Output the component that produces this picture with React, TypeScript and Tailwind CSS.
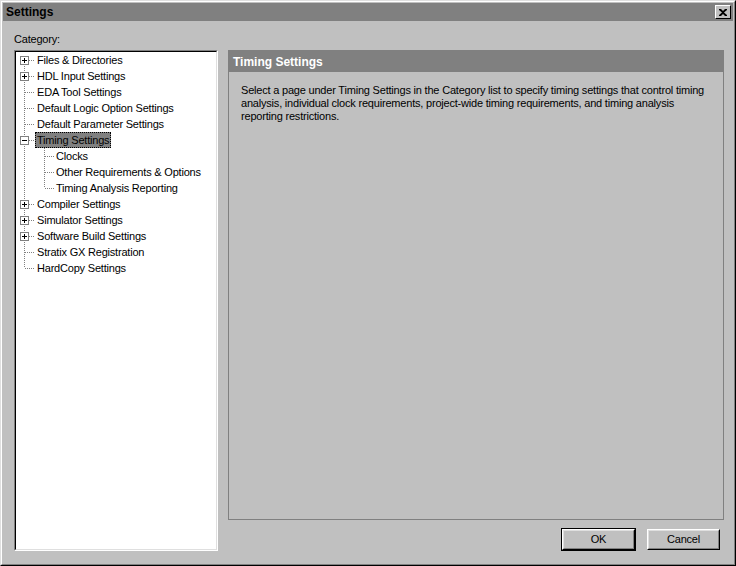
import React from "react";

type Node = {
  label: string;
  kind: "plus" | "minus" | "leaf" | "child";
  last?: boolean;
  first?: boolean;
  childLast?: boolean;
  selected?: boolean;
};

const nodes: Node[] = [
  { label: "Files & Directories", kind: "plus", first: true },
  { label: "HDL Input Settings", kind: "plus" },
  { label: "EDA Tool Settings", kind: "leaf" },
  { label: "Default Logic Option Settings", kind: "leaf" },
  { label: "Default Parameter Settings", kind: "leaf" },
  { label: "Timing Settings", kind: "minus", selected: true },
  { label: "Clocks", kind: "child" },
  { label: "Other Requirements & Options", kind: "child" },
  { label: "Timing Analysis Reporting", kind: "child", childLast: true },
  { label: "Compiler Settings", kind: "plus" },
  { label: "Simulator Settings", kind: "plus" },
  { label: "Software Build Settings", kind: "plus" },
  { label: "Stratix GX Registration", kind: "leaf" },
  { label: "HardCopy Settings", kind: "leaf", last: true },
];

const dot = { stroke: "#808080", strokeWidth: 1, strokeDasharray: "1 1", shapeRendering: "crispEdges" as const };

function Connector({ node }: { node: Node }) {
  const isChild = node.kind === "child";
  const w = isChild ? 38 : 19;
  const y1 = node.first ? 8 : 0;
  const y2 = node.last ? 8 : 16;
  return (
    <svg width={w} height={16} className="shrink-0">
      <line x1={8.5} y1={y1} x2={8.5} y2={y2} style={dot} />
      {!isChild && <line x1={9} y1={8.5} x2={19} y2={8.5} style={dot} />}
      {isChild && (
        <>
          <line x1={28.5} y1={0} x2={28.5} y2={node.childLast ? 8 : 16} style={dot} />
          <line x1={29} y1={8.5} x2={38} y2={8.5} style={dot} />
        </>
      )}
      {(node.kind === "plus" || node.kind === "minus") && (
        <>
          <rect x={4.5} y={4.5} width={8} height={8} fill="#ffffff" stroke="#808080" shapeRendering="crispEdges" />
          <line x1={6} y1={8.5} x2={11} y2={8.5} stroke="#000" shapeRendering="crispEdges" />
          {node.kind === "plus" && <line x1={8.5} y1={6} x2={8.5} y2={11} stroke="#000" shapeRendering="crispEdges" />}
        </>
      )}
    </svg>
  );
}

function TreeRow({ node }: { node: Node }) {
  return (
    <div className="flex h-[16px] items-center">
      <Connector node={node} />
      {node.selected ? (
        <span className="h-[16px] flex items-center px-[1px] bg-[#808080] border border-dotted border-black leading-none">
          {node.label}
        </span>
      ) : (
        <span className="px-[2px] leading-none">{node.label}</span>
      )}
    </div>
  );
}

function Button({ label, isDefault }: { label: string; isDefault?: boolean }) {
  return (
    <div className={isDefault ? "border border-black" : "border border-transparent"}>
      <div className="w-[73px] h-[21px] bg-[#c0c0c0] border border-t-white border-l-white border-r-black border-b-black">
        <div className="w-full h-full flex items-center justify-center border border-t-[#dfdfdf] border-l-[#dfdfdf] border-r-[#808080] border-b-[#808080]">
          {label}
        </div>
      </div>
    </div>
  );
}

export default function App() {
  return (
    <div
      className="w-[736px] h-[566px] bg-[#c0c0c0] border border-t-[#dfdfdf] border-l-[#dfdfdf] border-r-black border-b-black text-[11px] tracking-[-0.2px] text-black"
      style={{ fontFamily: '"Liberation Sans", Arial, sans-serif' }}
    >
      <div className="w-full h-full flex flex-col border border-t-white border-l-white border-r-[#808080] border-b-[#808080] p-[1px]">
        {/* Title bar */}
        <div className="h-[18px] bg-[#808080] flex items-center justify-between pl-[3px] pr-[2px] shrink-0">
          <span className="font-bold text-[12px] tracking-normal">Settings</span>
          <div className="w-[16px] h-[14px] bg-[#c0c0c0] border border-t-white border-l-white border-r-black border-b-black flex items-center justify-center">
            <svg width="8" height="7" viewBox="0 0 8 7">
              <path d="M0 0h2l2 2 2-2h2v1L5 3.5 8 6v1H6L4 5 2 7H0V6l3-2.5L0 1z" fill="#000" />
            </svg>
          </div>
        </div>

        {/* Body */}
        <div className="flex-1 flex flex-col pl-[11px] pr-[9px] pt-[12px]">
          <div className="h-[13px] leading-[13px]">Category:</div>
          <div className="flex gap-[10px] mt-[4px]">
            {/* Tree */}
            <div className="w-[204px] h-[501px] shrink-0 border border-t-[#808080] border-l-[#808080] border-r-white border-b-white">
              <div className="w-full h-full bg-white border border-t-black border-l-black border-r-[#dfdfdf] border-b-[#dfdfdf]">
                {nodes.map((n) => (
                  <TreeRow key={n.label} node={n} />
                ))}
              </div>
            </div>

            {/* Right side */}
            <div className="flex-1 flex flex-col">
              <div className="h-[470px] border border-[#808080] flex flex-col">
                <div className="h-[21px] bg-[#808080] text-white font-bold text-[12px] tracking-normal flex items-center pl-[4px] shrink-0">
                  Timing Settings
                </div>
                <div className="pl-[12px] pt-[12px] leading-[13px] whitespace-nowrap">
                  Select a page under Timing Settings in the Category list to specify timing settings that control timing
                  <br />
                  analysis, individual clock requirements, project-wide timing requirements, and timing analysis
                  <br />
                  reporting restrictions.
                </div>
              </div>
              <div className="flex justify-end gap-[10px] mt-[8px] pr-[3px]">
                <Button label="OK" isDefault />
                <Button label="Cancel" />
              </div>
            </div>
          </div>
        </div>
      </div>
    </div>
  );
}
